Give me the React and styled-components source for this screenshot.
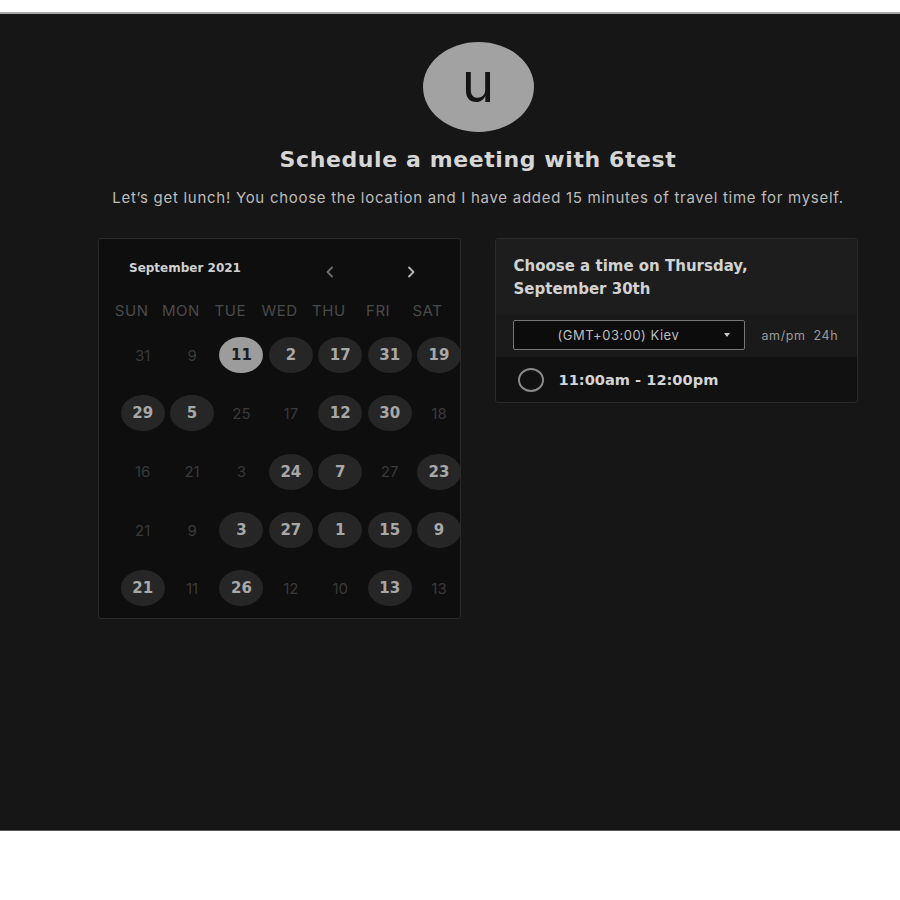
import React from 'react';
import styled, { createGlobalStyle } from 'styled-components';

const weekdays = ['SUN', 'MON', 'TUE', 'WED', 'THU', 'FRI', 'SAT'];

// state: 'sel' | 'on' | 'off'
const days = [
  [['31', 'off'], ['9', 'off'], ['11', 'sel'], ['2', 'on'], ['17', 'on'], ['31', 'on'], ['19', 'on']],
  [['29', 'on'], ['5', 'on'], ['25', 'off'], ['17', 'off'], ['12', 'on'], ['30', 'on'], ['18', 'off']],
  [['16', 'off'], ['21', 'off'], ['3', 'off'], ['24', 'on'], ['7', 'on'], ['27', 'off'], ['23', 'on']],
  [['21', 'off'], ['9', 'off'], ['3', 'on'], ['27', 'on'], ['1', 'on'], ['15', 'on'], ['9', 'on']],
  [['21', 'on'], ['11', 'off'], ['26', 'on'], ['12', 'off'], ['10', 'off'], ['13', 'on'], ['13', 'off']],
];

const Chevron = ({ dir, color }) => (
  <svg width="10" height="12" viewBox="0 0 10 12" fill="none">
    <path
      d={dir === 'left' ? 'M7 1.5L2.5 6L7 10.5' : 'M3 1.5L7.5 6L3 10.5'}
      stroke={color}
      strokeWidth="1.8"
      strokeLinecap="round"
      strokeLinejoin="round"
    />
  </svg>
);

const App = () => {
  return (
    <>
      <GlobalStyle />
      <Page>
        <Frame>
          <Content>
            <Avatar>u</Avatar>
            <Title>Schedule a meeting with 6test</Title>
            <Subtitle>
              Let’s get lunch! You choose the location and I have added 15 minutes of travel time for myself.
            </Subtitle>
            <Panels>
              <Calendar>
                <CalHeader>
                  <MonthLabel>September 2021</MonthLabel>
                  <NavButton $left={true}>
                    <Chevron dir="left" color="#6e6e6e" />
                  </NavButton>
                  <NavButton>
                    <Chevron dir="right" color="#b8b8b8" />
                  </NavButton>
                </CalHeader>
                <WeekRow>
                  {weekdays.map((w) => (
                    <WeekDay key={w}>{w}</WeekDay>
                  ))}
                </WeekRow>
                <DayGrid>
                  {days.flat().map(([d, s], i) => (
                    <DayCell key={i}>
                      <Day $state={s}>{d}</Day>
                    </DayCell>
                  ))}
                </DayGrid>
              </Calendar>

              <TimePanel>
                <TimeHeader>
                  Choose a time on Thursday,
                  <br />
                  September 30th
                </TimeHeader>
                <Toolbar>
                  <ZoneSelect>
                    <span>(GMT+03:00) Kiev</span>
                    <Caret />
                  </ZoneSelect>
                  <FormatToggle>
                    <span>am/pm</span>
                    <span>24h</span>
                  </FormatToggle>
                </Toolbar>
                <Slot>
                  <Radio />
                  <SlotText>11:00am - 12:00pm</SlotText>
                </Slot>
              </TimePanel>
            </Panels>
          </Content>
        </Frame>
      </Page>
    </>
  );
};

export default App;

const boldFont = `"DejaVu Sans", Verdana, sans-serif`;

const GlobalStyle = createGlobalStyle`
  html, body {
    margin: 0;
    padding: 0;
    background: #ffffff;
  }
  body {
    font-family: Inter, "Liberation Sans", Arial, sans-serif;
  }
`;

const Page = styled.div`
  width: 900px;
  height: 900px;
  padding-top: 12px;
  box-sizing: border-box;
  background: #ffffff;
`;

const Frame = styled.div`
  height: 819px;
  box-sizing: border-box;
  background: #161616;
  border-top: 2px solid #a8a8a8;
  border-bottom: 1px solid #5a5a5a;
`;

const Content = styled.div`
  width: 760px;
  margin-left: 98px;
  display: flex;
  flex-direction: column;
  align-items: center;
`;

const Avatar = styled.div`
  margin-top: 28px;
  width: 111px;
  height: 90px;
  border-radius: 50%;
  background: #a2a2a2;
  color: #141414;
  display: flex;
  align-items: center;
  justify-content: center;
  font-size: 55px;
  line-height: 1;
  padding-bottom: 10px;
  box-sizing: border-box;
`;

const Title = styled.h1`
  margin: 14px 0 0;
  font-family: ${boldFont};
  font-size: 22px;
  font-weight: 700;
  letter-spacing: 0.6px;
  color: #d6d6d6;
  line-height: 28px;
`;

const Subtitle = styled.p`
  margin: 14px 0 0;
  font-size: 15px;
  color: #bcbcbc;
  line-height: 20px;
  letter-spacing: 0.72px;
  white-space: nowrap;
`;

const Panels = styled.div`
  margin-top: 30px;
  width: 760px;
  display: flex;
  align-items: flex-start;
  gap: 34px;
`;

const Calendar = styled.div`
  width: 363px;
  height: 381px;
  box-sizing: border-box;
  background: #0e0e0e;
  border: 1px solid #2a2a2a;
  border-radius: 3px;
  overflow: hidden;
`;

const CalHeader = styled.div`
  display: flex;
  align-items: center;
  height: 24px;
  margin-top: 17px;
  padding-left: 30px;
`;

const MonthLabel = styled.div`
  font-family: ${boldFont};
  font-size: 12px;
  font-weight: 700;
  color: #d0d0d0;
  width: 189px;
`;

const NavButton = styled.div`
  width: 24px;
  height: 24px;
  display: flex;
  align-items: center;
  justify-content: center;
  margin-top: 7px;
  margin-right: ${(p) => (p.$left ? '57px' : '0')};
`;

const WeekRow = styled.div`
  display: grid;
  grid-template-columns: repeat(7, 49.3px);
  padding-left: 8px;
  margin-top: 19px;
  height: 22px;
  align-items: center;
`;

const WeekDay = styled.div`
  text-align: center;
  font-size: 15px;
  color: #4a4a4a;
  letter-spacing: 0.5px;
`;

const DayGrid = styled.div`
  display: grid;
  grid-template-columns: repeat(7, 49.4px);
  grid-auto-rows: 58.3px;
  padding-left: 19px;
  margin-top: 5px;
  width: 346px;
`;

const DayCell = styled.div`
  display: flex;
  align-items: center;
  justify-content: center;
`;

const Day = styled.div`
  width: 44px;
  height: 36px;
  border-radius: 50%;
  display: flex;
  align-items: center;
  justify-content: center;
  font-family: ${(p) => (p.$state === 'off' ? 'inherit' : boldFont)};
  font-size: 15px;
  font-weight: ${(p) => (p.$state === 'off' ? 400 : 700)};
  color: ${(p) =>
    p.$state === 'sel' ? '#1e1e1e' : p.$state === 'on' ? '#a8a8a8' : '#3a3a3a'};
  background: ${(p) =>
    p.$state === 'sel' ? '#9c9c9c' : p.$state === 'on' ? '#262626' : 'transparent'};
`;

const TimePanel = styled.div`
  width: 364px;
  box-sizing: border-box;
  border: 1px solid #2a2a2a;
  border-radius: 3px;
  overflow: hidden;
  background: #111111;
`;

const TimeHeader = styled.div`
  background: #1d1d1d;
  height: 75px;
  box-sizing: border-box;
  padding: 16px 18px 0;
  font-family: ${boldFont};
  font-size: 15px;
  font-weight: 700;
  line-height: 23px;
  color: #d2d2d2;
`;

const Toolbar = styled.div`
  background: #1a1a1a;
  height: 43px;
  box-sizing: border-box;
  padding: 6px 0 0 17px;
  display: flex;
  align-items: flex-start;
  gap: 17px;
`;

const ZoneSelect = styled.div`
  width: 232px;
  height: 30px;
  box-sizing: border-box;
  background: #0c0c0c;
  border: 1px solid #777777;
  border-radius: 2px;
  display: flex;
  align-items: center;
  padding: 0 14px 0 44px;
  font-size: 13px;
  color: #bdbdbd;
  letter-spacing: 0.5px;

  span {
    flex: 1;
  }
`;

const Caret = styled.div`
  width: 0;
  height: 0;
  border-left: 3.5px solid transparent;
  border-right: 3.5px solid transparent;
  border-top: 4px solid #c8c8c8;
`;

const FormatToggle = styled.div`
  display: flex;
  gap: 8px;
  height: 30px;
  align-items: center;
  font-size: 12.5px;
  color: #9a9a9a;
  letter-spacing: 0.6px;
`;

const Slot = styled.div`
  height: 45px;
  display: flex;
  align-items: center;
  padding-left: 22px;
  gap: 15px;
`;

const Radio = styled.div`
  width: 22px;
  height: 20px;
  border-radius: 50%;
  border: 2px solid #8a8a8a;
`;

const SlotText = styled.div`
  font-family: ${boldFont};
  font-size: 14.6px;
  font-weight: 700;
  color: #d4d4d4;
`;
